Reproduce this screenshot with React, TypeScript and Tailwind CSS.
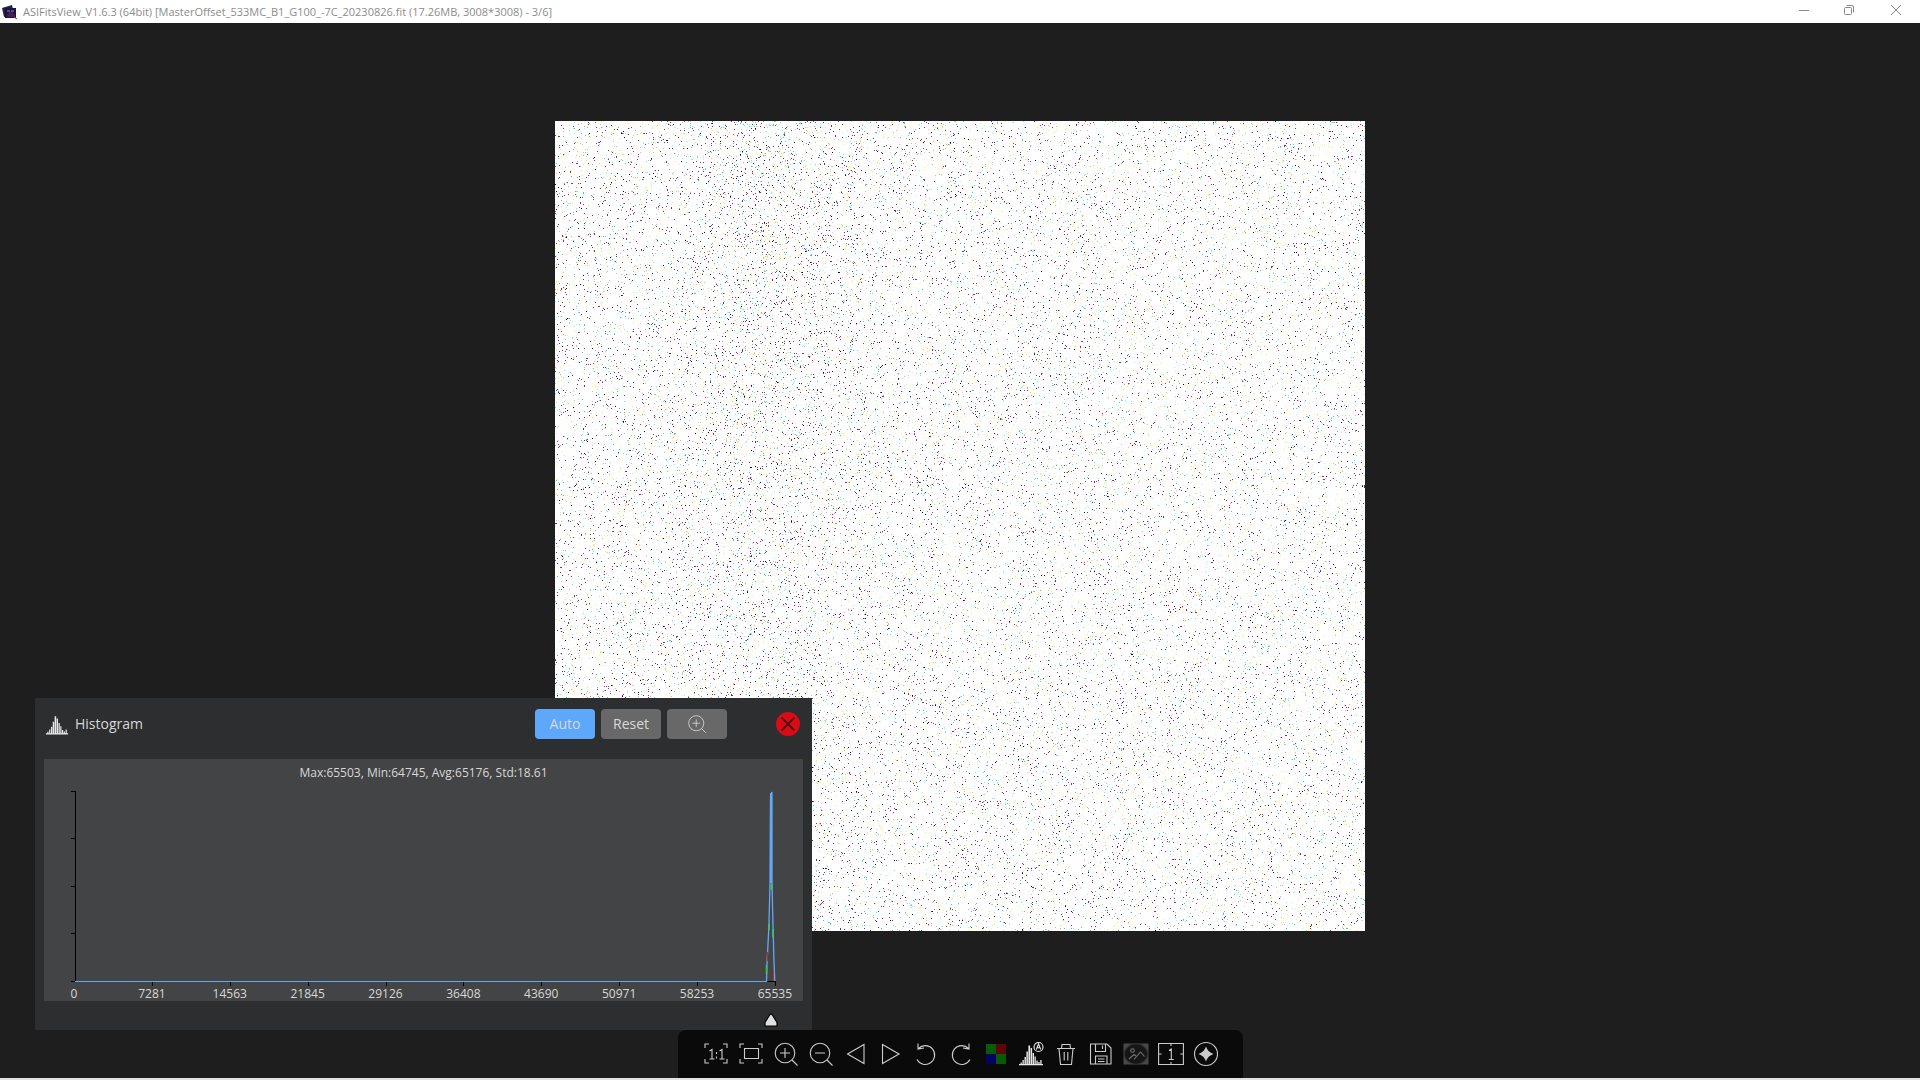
import React, { useEffect, useRef } from "react";

const FRAME_SIZE = 810;

const darkSpecks = [
  "#a0189c",
  "#a0189c",
  "#8c2a9c",
  "#6a2ca0",
  "#4234b8",
  "#3c3a78",
  "#c01c4c",
  "#a83040",
  "#0c0820",
];

const lightSpecks = [
  "#3cc8dc",
  "#6edcea",
  "#98f0f4",
  "#b4f4f0",
  "#f4ec50",
  "#f8f07c",
  "#fbf4a4",
  "#fbf4a4",
  "#54c884",
  "#90e4a8",
  "#f4b468",
];

const ticks = [
  "0",
  "7281",
  "14563",
  "21845",
  "29126",
  "36408",
  "43690",
  "50971",
  "58253",
  "65535",
];

// small seeded generator so the frame looks the same on every mount
const createRandom = (seed: number) => () => {
  seed = (seed + 0x6d2b79f5) | 0;
  let t = Math.imul(seed ^ (seed >>> 15), 1 | seed);
  t = (t + Math.imul(t ^ (t >>> 7), 61 | t)) ^ t;
  return ((t ^ (t >>> 14)) >>> 0) / 4294967296;
};

function FitsFrame() {
  const canvasRef = useRef<HTMLCanvasElement>(null);

  useEffect(() => {
    const ctx = canvasRef.current?.getContext("2d");
    if (!ctx) return;
    const random = createRandom(533);
    ctx.fillStyle = "#fefefe";
    ctx.fillRect(0, 0, FRAME_SIZE, FRAME_SIZE);

    for (let y = 0; y < FRAME_SIZE; y++) {
      for (let x = 0; x < FRAME_SIZE; x++) {
        // denser vertical band left of the centre
        const band = Math.exp(-Math.pow((x - 215) / 75, 2)) * (1 - y / 1300);
        const dark = 0.017 + 0.014 * band + 0.004 * (1 - x / FRAME_SIZE);
        const light = 0.042 + 0.028 * band;
        const value = random();
        if (value > dark + light) continue;
        const palette = value < dark ? darkSpecks : lightSpecks;
        ctx.fillStyle = palette[Math.floor(random() * palette.length)];
        ctx.fillRect(x, y, 1, 1);
      }
    }
  }, []);

  return (
    <canvas
      ref={canvasRef}
      width={FRAME_SIZE}
      height={FRAME_SIZE}
      role="img"
      className="block shrink-0"
    />
  );
}

function Icon({
  children,
  className = "size-[26px]",
}: {
  children: React.ReactNode;
  className?: string;
}) {
  return (
    <svg
      viewBox="0 0 26 26"
      fill="none"
      stroke="currentColor"
      strokeWidth="1.1"
      className={className}
      aria-hidden="true"
    >
      {children}
    </svg>
  );
}

const corners = "M6 3H2V7M20 3H24V7M6 22H2V18M20 22H24V18";

function HistogramBars() {
  return (
    <path
      stroke="none"
      fill="#e8e8e8"
      d="M1 23h24v1.300H1zM2.500 21.500h1.300V24H2.500zM4.500 19h1.300v5H4.500zM6.500 16h1.400v8H6.500zM8.400 10.500h1.500V24H8.400zM10.400 4.500h1.700V24h-1.700zM12.600 7h1.500v17h-1.500zM14.600 12h1.400v12h-1.400zM16.500 15.500h1.300V24h-1.300zM18.400 19.500h1.300V24h-1.300zM20.300 21h1.300v3h-1.300zM22.300 19h1.300v5h-1.300z"
    />
  );
}

const tools = [
  {
    label: "Actual size",
    icon: (
      <Icon>
        <path d={corners} />
        <path d="M6.500 10L9 8.500V18M6.500 18h5M16.500 10L19 8.500V18M16.500 18h5M13.500 11v2M13.500 15.500v2" />
      </Icon>
    ),
  },
  {
    label: "Fit to window",
    icon: (
      <Icon>
        <path d={corners} />
        <path d="M6.500 7.500h14v10h-14z" />
      </Icon>
    ),
  },
  {
    label: "Zoom in",
    icon: (
      <Icon>
        <circle cx="12" cy="12" r="9.800" />
        <path d="M7 12h10M12 7v10M19 19l5.500 5.500" />
      </Icon>
    ),
  },
  {
    label: "Zoom out",
    icon: (
      <Icon>
        <circle cx="12" cy="12" r="9.800" />
        <path d="M7 12h10M19 19l5.500 5.500" />
      </Icon>
    ),
  },
  {
    label: "Previous",
    icon: (
      <Icon>
        <path d="M21 3.500v19L4.500 13z" />
      </Icon>
    ),
  },
  {
    label: "Next",
    icon: (
      <Icon>
        <path d="M4.500 3.500v19L21 13z" />
      </Icon>
    ),
  },
  {
    label: "Rotate left",
    icon: (
      <Icon>
        <path d="M4 18.500A9.400 9.400 0 1 0 5.500 7.500M5 2.500v5.500l6-1" />
      </Icon>
    ),
  },
  {
    label: "Rotate right",
    icon: (
      <Icon>
        <path d="M22 18.500A9.400 9.400 0 1 1 20.500 7.500M21 2.500v5.500l-6-1" />
      </Icon>
    ),
  },
  {
    label: "Debayer",
    icon: (
      <Icon>
        <g stroke="none">
          <path fill="#065a08" d="M3 3h10v10H3zM13 13h10v10H13z" />
          <path fill="#5c0606" d="M13 3h10v10H13z" />
          <path fill="#04045e" d="M3 13h10v10H3z" />
        </g>
      </Icon>
    ),
  },
  {
    label: "Histogram",
    icon: (
      <Icon>
        <HistogramBars />
        <circle cx="20.500" cy="6" r="4.500" fill="#0a0a0a" stroke="#e8e8e8" />
        <path d="M18.300 8.500l2.200-5.500 2.200 5.500M19 6.800h3" stroke="#e8e8e8" />
      </Icon>
    ),
  },
  {
    label: "Delete",
    icon: (
      <Icon>
        <path d="M4 7.500h18M8.500 7.500l.5-4h8l.5 4M6 7.500l1.500 16h11L20 7.500M11.200 11v8.500M14.800 11v8.500" />
      </Icon>
    ),
  },
  {
    label: "Save",
    icon: (
      <Icon>
        <path d="M2.500 3h16.500l4 4v16H2.500zM7.500 3v7.500h10V3M14.500 4.500v3.500M7.500 23v-8h11.500v8M10 18h6.500M10 20.500h6.500" />
      </Icon>
    ),
  },
  {
    label: "Star field",
    icon: (
      <Icon>
        <path fill="#484848" stroke="none" d="M.5 2.500h25v21H.5z" />
        <ellipse cx="13" cy="13" rx="11.500" ry="10.200" fill="#161616" stroke="#303030" />
        <g stroke="#747474">
          <circle cx="9.500" cy="9.500" r="1.800" />
          <path d="M6 18l5-4.500 2 1.500M11 18.500l6.500-7.500 4 4.500" />
        </g>
      </Icon>
    ),
  },
  {
    label: "Single frame",
    icon: (
      <Icon>
        <path d="M.6 2.500h24.800v21H.6zM.6 13h3M22.400 13h3M13 2.500V5M13 21v2.500M11 9.500l2.300-1.500v10.500M10.800 18.500h5" />
      </Icon>
    ),
  },
  {
    label: "Star detection",
    icon: (
      <Icon>
        <circle cx="13" cy="13" r="11.500" />
        <path
          fill="currentColor"
          stroke="none"
          d="M13 5.500q1.800 5.700 7.500 7.500q-5.700 1.800-7.500 7.500q-1.800-5.700-7.500-7.500q5.700-1.800 7.500-7.500z"
        />
      </Icon>
    ),
  },
];

function TitleBar() {
  return (
    <header className="flex h-[23px] shrink-0 items-center bg-white text-[#8c8c8c]">
      <svg viewBox="0 0 16 16" className="ml-[2px] size-4" aria-hidden="true">
        <path d="M0 4l10-3 2 9-10 3z" fill="#1b2440" />
        <path d="M3 4h11v10H3z" fill="#1d1242" />
        <path d="M5 10l4-3 4 4v2H5z" fill="#4a1f55" />
        <path d="M5 7h3M9 7h3" stroke="#8590c0" />
        <path d="M12 13l3 2" stroke="#4a4a5a" />
      </svg>
      <h1 className="ml-[5px] flex-1 truncate text-[11px] leading-4">
        ASIFitsView_V1.6.3 (64bit)
        [MasterOffset_533MC_B1_G100_-7C_20230826.fit (17.26MB, 3008*3008) - 3/6]
      </h1>
      <div className="flex h-full items-center pb-[3px] text-[#8a8a8a]">
        <button aria-label="Minimize" className="grid h-full w-[45px] place-items-center">
          <svg viewBox="0 0 12 12" fill="none" stroke="currentColor" className="size-3">
            <path d="M1 6.500h10" />
          </svg>
        </button>
        <button aria-label="Restore" className="grid h-full w-[45px] place-items-center">
          <svg viewBox="0 0 12 12" fill="none" stroke="currentColor" className="size-3">
            <rect x="1.500" y="3.500" width="7" height="7" rx="1" />
            <path d="M3.500 1.500h5.500q1.500 0 1.500 1.500v5.500" />
          </svg>
        </button>
        <button aria-label="Close" className="grid h-full w-[49px] place-items-center">
          <svg viewBox="0 0 12 12" fill="none" stroke="currentColor" className="size-3">
            <path d="M1 1l10 10M11 1L1 11" />
          </svg>
        </button>
      </div>
    </header>
  );
}

function HistogramPlot() {
  return (
    <svg viewBox="0 0 759 200" fill="none" className="block w-full" aria-hidden="true">
      <g stroke="#000000" shapeRendering="crispEdges">
        <path d="M31.500 5V195M27 5.500h5M27 52.500h5M27 100.500h5M27 147.500h5M27 195.500h704" />
        <path d="M108.500 195v5M186.500 195v5M264.500 195v5M342.500 195v5M419.500 195v5M497.500 195v5M575.500 195v5M653.500 195v5M731.500 195v5" />
      </g>
      <path d="M31 195.500h691" stroke="#64a8f5" shapeRendering="crispEdges" />
      <path
        d="M722.500 196l.5-18 2-40 1-42 .5-86 1.500-4v90l1 44 1 36 .8 19"
        stroke="#64a8f5"
        strokeWidth="1.300"
      />
      <path d="M727 7V97" stroke="#64a8f5" strokeWidth="2" />
      <path d="M723.500 175v-9M729.500 195v-10" stroke="#b03030" />
      <path d="M722.500 188v-9M725 144v-6M727.500 98v6M729 143v8" stroke="#38c860" strokeWidth="1.500" />
    </svg>
  );
}

function HistogramPanel() {
  return (
    <section className="absolute bottom-0 left-[35px] w-[777px] max-w-full bg-[#2d2e2f] px-[9px] text-[#d8d8d8]">
      <div className="flex h-[61px] items-start pt-[11px]">
        <div className="flex h-[30px] flex-1 items-center gap-[6px] pl-px">
          <Icon className="size-6">
            <HistogramBars />
          </Icon>
          <h2 className="text-[14px] leading-5">Histogram</h2>
        </div>
        <div className="flex gap-[6px] text-[14px] leading-5">
          <button className="h-[30px] w-[60px] rounded-[4px] bg-[#5ea8fb]">Auto</button>
          <button className="h-[30px] w-[60px] rounded-[4px] bg-[#686868]">Reset</button>
          <button
            aria-label="Zoom histogram"
            className="grid h-[30px] w-[60px] place-items-center rounded-[4px] bg-[#686868]"
          >
            <Icon className="size-5">
              <circle cx="12" cy="12" r="9.800" />
              <path d="M7 12h10M12 7v10M19 19l5.500 5.500" />
            </Icon>
          </button>
        </div>
        <button
          aria-label="Close histogram"
          className="mt-[3px] mr-[3px] ml-[49px] grid size-6 place-items-center rounded-full bg-[#dc0a14] text-[#4a1216]"
        >
          <svg viewBox="0 0 16 16" stroke="currentColor" strokeWidth="1.800" className="size-4">
            <path d="M1.500 1.500l13 13M14.500 1.500l-13 13" />
          </svg>
        </button>
      </div>

      <div className="h-[242px] bg-[#434445] pt-[5px] text-[12px]">
        <p className="h-[22px] text-center leading-[18px]">
          Max:65503, Min:64745, Avg:65176, Std:18.61
        </p>
        <HistogramPlot />
        <div className="flex justify-between pr-7 pl-[30px] leading-4">
          {ticks.map((tick) => (
            <span key={tick} className="flex w-0 justify-center">
              {tick}
            </span>
          ))}
        </div>
      </div>

      <div className="flex h-[29px] justify-end pt-3 pr-[25px]">
        <svg viewBox="0 0 14 14" className="size-[14px]" aria-hidden="true">
          <path
            d="M7 .8Q8 1 9 3l4 6.500v3.500H1V9.500L5 3Q6 1 7 .8z"
            fill="#e0e0e0"
            stroke="#000000"
            strokeWidth="1.200"
            strokeLinejoin="round"
          />
        </svg>
      </div>
    </section>
  );
}

export default function App() {
  return (
    <div className="flex h-screen flex-col overflow-hidden border-b-2 border-[#e4e2e2] bg-[#1e1e1e] font-['Open_Sans','Noto_Sans',sans-serif]">
      <TitleBar />
      <main className="relative flex min-h-0 flex-1 items-center justify-center pb-[2px]">
        <FitsFrame />
        <HistogramPanel />
      </main>
      <nav className="mx-auto flex h-12 shrink-0 items-center rounded-t-lg bg-[#0a0a0a] px-5 text-[#cccccc]">
        {tools.map((tool) => (
          <button
            key={tool.label}
            aria-label={tool.label}
            className="flex h-full w-[35px] items-center justify-end pr-1"
          >
            {tool.icon}
          </button>
        ))}
      </nav>
    </div>
  );
}
